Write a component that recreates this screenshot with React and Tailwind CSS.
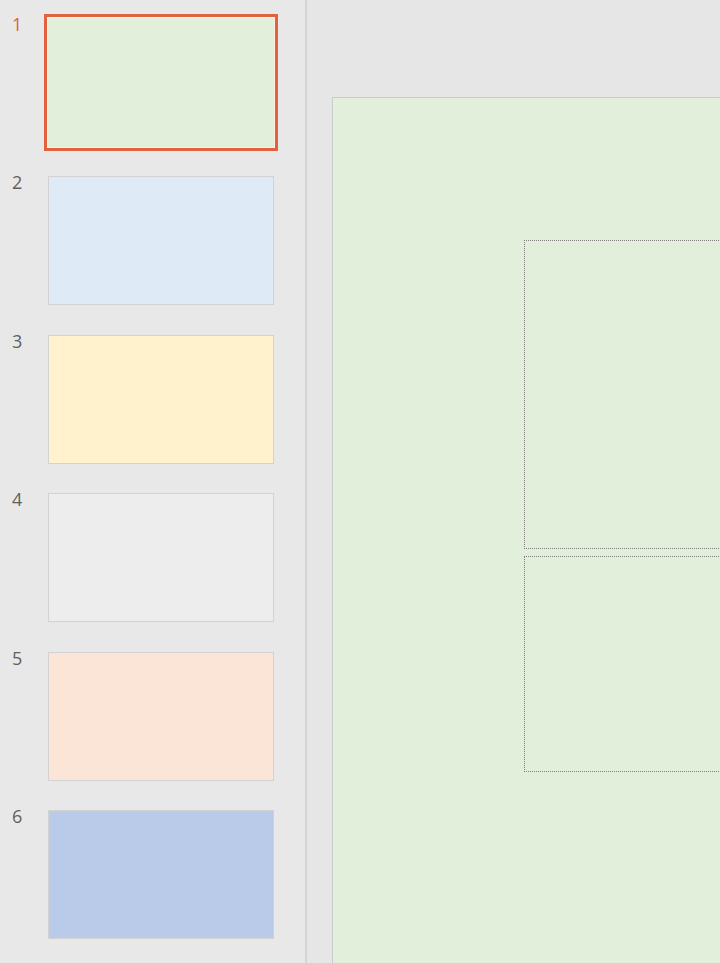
// Slide sorter view: thumbnails on the left, current slide on the right
const slides = [
  { num: 1, color: "bg-[#e2efda]" },
  { num: 2, color: "bg-[#deebf7]" },
  { num: 3, color: "bg-[#fff2cc]" },
  { num: 4, color: "bg-[#ededed]" },
  { num: 5, color: "bg-[#fbe5d6]" },
  { num: 6, color: "bg-[#b9cbe9]" },
];

function Thumb(props) {
  const slide = props.slide;
  const selected = props.selected;

  let numClass = "w-[35px] pl-[12px] -mt-[3px] text-[18px] leading-[18px] ";
  if (selected) {
    numClass = numClass + "text-[#e0603c]";
  } else {
    numClass = numClass + "text-[#606060]";
  }

  let boxClass = "w-[226px] h-[129px] " + slide.color + " ";
  if (selected) {
    boxClass = boxClass + "shadow-[0_0_0_1px_#fdf1e3,0_0_0_4px_#e2613f]";
  } else {
    boxClass = boxClass + "border border-[#d2d2d2]";
  }

  return (
    <div className="flex items-start h-[158.4px]">
      <div className={numClass}>{slide.num}</div>
      <div className="ml-[13px]">
        <div className={boxClass}></div>
      </div>
    </div>
  );
}

export default function App() {
  return (
    <div
      className="flex w-[720px] h-[963px] overflow-hidden bg-[#e6e6e6]"
      style={{ fontFamily: "'Open Sans', 'Noto Sans', sans-serif" }}
    >
      {/* Thumbnail pane */}
      <aside className="w-[307px] shrink-0 pt-[18px] bg-[#e8e8e8] border-r-2 border-[#d4d4d4]">
        {slides.map(function (s) {
          return <Thumb key={s.num} slide={s} selected={s.num === 1} />;
        })}
      </aside>

      {/* Editing canvas */}
      <main className="flex-1 pl-[25px] pt-[97px] overflow-hidden">
        <div className="w-[700px] h-[900px] bg-[#e2efda] border border-[#cbcbcb] pl-[191px] pt-[142px]">
          <div className="h-[309px] border border-dotted border-[#7d7d7d]"></div>
          <div className="h-[216px] mt-[7px] border border-dotted border-[#7d7d7d]"></div>
        </div>
      </main>
    </div>
  );
}
